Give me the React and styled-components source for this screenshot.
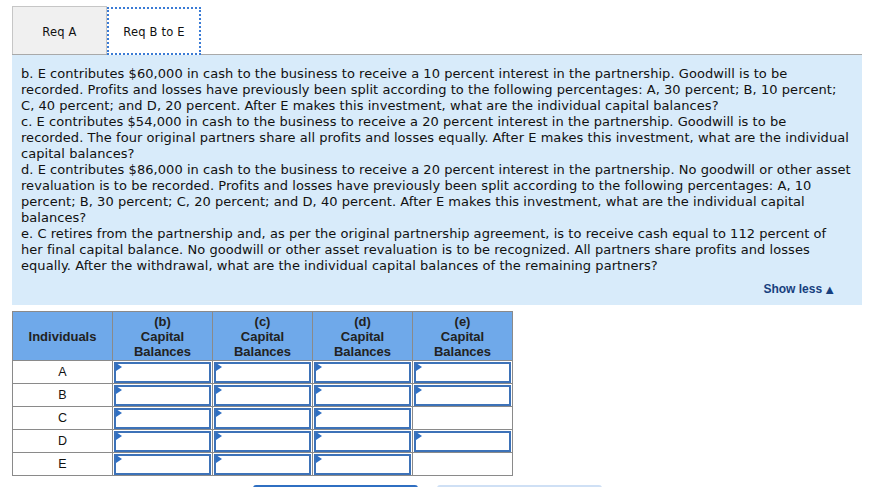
import React from "react";
import styled, { createGlobalStyle } from "styled-components";

const Global = createGlobalStyle`
  html, body { margin: 0; padding: 0; background: #fff; }
  body { font-family: "DejaVu Sans", Verdana, sans-serif; color: #000; }
`;

const Page = styled.div`
  box-sizing: border-box;
  padding: 6px 15px 0 12px;
  width: 877px;
  height: 487px;
  overflow: hidden;
`;

const Tabs = styled.div`
  display: flex;
  align-items: flex-end;
  height: 48px;
  border-bottom: 1px solid #a9a9a9;
`;

const Tab = styled.div`
  box-sizing: border-box;
  width: ${(p) => p.$w}px;
  height: 48px;
  display: flex;
  align-items: center;
  justify-content: center;
  font-family: "DejaVu Sans", Verdana, sans-serif;
  font-size: 11.5px;
  letter-spacing: 0.2px;
  color: #111;
  background: ${(p) => (p.$active ? "#fff" : "#f0f0f0")};
  border: ${(p) => (p.$active ? "2px dotted #3a7bd5" : "1px solid #c6c6c6")};
  border-bottom: ${(p) => (p.$active ? "2px dotted #3a7bd5" : "none")};
  margin-bottom: ${(p) => (p.$active ? "-1px" : "0")};
  padding-top: 2px;
`;

const Panel = styled.div`
  background: #d8ebfa;
  padding: 11px 9px 9px 9px;
`;

const Para = styled.p`
  margin: 0;
  font-size: 13px;
  line-height: 16px;
  letter-spacing: 0.05px;
  white-space: nowrap;
  color: #111;
`;

const ShowLess = styled.div`
  display: flex;
  justify-content: flex-end;
  align-items: center;
  gap: 1px;
  margin-top: 8px;
  padding-right: 17px;
  font-family: "Liberation Sans", Arial, sans-serif;
  font-weight: bold;
  font-size: 12px;
  color: #173f7e;
`;

const Arrow = styled.span`
  font-size: 13px;
  line-height: 1;
`;

const Table = styled.table`
  margin-top: 6px;
  border-collapse: collapse;
  font-family: "Liberation Sans", Arial, sans-serif;
`;

const Th = styled.th`
  width: 99px;
  height: 48px;
  background: #6fa9ea;
  border: 1px solid #8a8a8a;
  font-size: 13px;
  font-weight: bold;
  line-height: 15px;
  color: #222;
  padding: 0;
  text-align: center;
`;

const Td = styled.td`
  height: 22px;
  border: 1px solid #8a8a8a;
  padding: 0;
  font-size: 12.5px;
  text-align: center;
  color: #111;
  position: relative;
`;

const InputBox = styled.div`
  position: absolute;
  inset: 1px 1px 0 1px;
  border: 2px solid #3d72b8;
  background: #fff;
`;

const Tri = styled.span`
  position: absolute;
  left: 0;
  top: -1px;
  width: 0;
  height: 0;
  border-top: 4px solid transparent;
  border-bottom: 4px solid transparent;
  border-left: 6px solid #2f6fc2;
`;

const Buttons = styled.div`
  display: flex;
  gap: 19px;
  margin-top: 9px;
  margin-left: 241px;
`;

const NavButton = styled.div`
  width: 165px;
  height: 30px;
  border-top: 2px solid ${(p) => (p.$primary ? "#2f6fc2" : "#cfe0f5")};
  border-radius: 3px 3px 0 0;
`;

const paragraphs = [
  [
    "b. E contributes $60,000 in cash to the business to receive a 10 percent interest in the partnership. Goodwill is to be",
    "recorded. Profits and losses have previously been split according to the following percentages: A, 30 percent; B, 10 percent;",
    "C, 40 percent; and D, 20 percent. After E makes this investment, what are the individual capital balances?",
  ],
  [
    "c. E contributes $54,000 in cash to the business to receive a 20 percent interest in the partnership. Goodwill is to be",
    "recorded. The four original partners share all profits and losses equally. After E makes this investment, what are the individual",
    "capital balances?",
  ],
  [
    "d. E contributes $86,000 in cash to the business to receive a 20 percent interest in the partnership. No goodwill or other asset",
    "revaluation is to be recorded. Profits and losses have previously been split according to the following percentages: A, 10",
    "percent; B, 30 percent; C, 20 percent; and D, 40 percent. After E makes this investment, what are the individual capital",
    "balances?",
  ],
  [
    "e. C retires from the partnership and, as per the original partnership agreement, is to receive cash equal to 112 percent of",
    "her final capital balance. No goodwill or other asset revaluation is to be recognized. All partners share profits and losses",
    "equally. After the withdrawal, what are the individual capital balances of the remaining partners?",
  ],
];

const rows = ["A", "B", "C", "D", "E"];
const hasInput = {
  A: [1, 1, 1, 1],
  B: [1, 1, 1, 1],
  C: [1, 1, 1, 0],
  D: [1, 1, 1, 1],
  E: [1, 1, 1, 0],
};

export default function App() {
  return (
    <>
      <Global />
      <Page>
        <Tabs>
          <Tab $w={95}>Req A</Tab>
          <Tab $w={94} $active>Req B to E</Tab>
        </Tabs>
        <Panel>
          {paragraphs.map((lines, pi) => (
            <Para key={pi}>
              {lines.map((l, li) => (
                <React.Fragment key={li}>
                  {li > 0 && <br />}
                  {l}
                </React.Fragment>
              ))}
            </Para>
          ))}
          <ShowLess>
            Show less<Arrow>▲</Arrow>
          </ShowLess>
        </Panel>
        <Table>
          <thead>
            <tr>
              <Th>Individuals</Th>
              {["b", "c", "d", "e"].map((l) => (
                <Th key={l}>
                  ({l})<br />Capital<br />Balances
                </Th>
              ))}
            </tr>
          </thead>
          <tbody>
            {rows.map((r) => (
              <tr key={r}>
                <Td>{r}</Td>
                {hasInput[r].map((h, i) => (
                  <Td key={i}>
                    {h ? (
                      <InputBox>
                        <Tri />
                      </InputBox>
                    ) : null}
                  </Td>
                ))}
              </tr>
            ))}
          </tbody>
        </Table>
        <Buttons>
          <NavButton $primary />
          <NavButton />
        </Buttons>
      </Page>
    </>
  );
}
